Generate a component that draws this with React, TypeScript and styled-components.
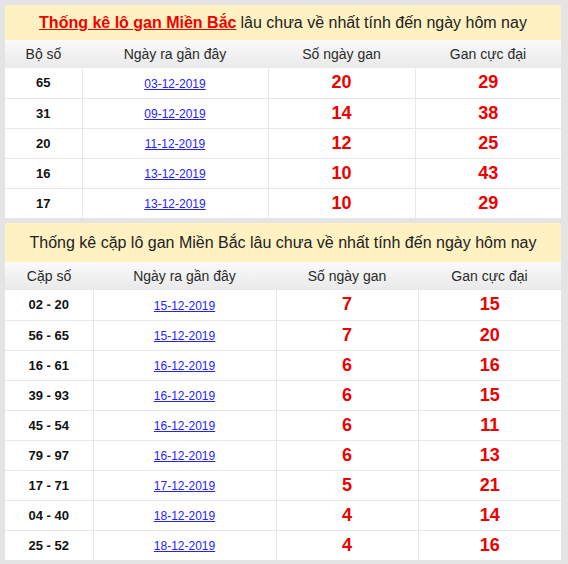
import React from "react";
import styled, { createGlobalStyle } from "styled-components";

const Global = createGlobalStyle`
  html, body { margin: 0; padding: 0; background: #e4e4e4; }
  body { font-family: "Liberation Sans", Arial, sans-serif; }
`;

const Page = styled.div`
  width: 556px;
  padding: 5px 7px 4px 5px;
  display: flex;
  flex-direction: column;
  gap: 5px;
`;

const Box = styled.section`
  background: #fff;
  border-radius: 4px 4px 0 0;
  overflow: hidden;
`;

const Title = styled.div<{ $h: number }>`
  height: ${(p) => p.$h}px;
  background: #fff1c2;
  display: flex;
  align-items: center;
  justify-content: center;
  font-size: 16px;
  color: #222;
  white-space: nowrap;
`;

const TitleStrong = styled.a`
  color: #f20000;
  font-weight: bold;
  text-decoration: underline;
  margin-right: 4px;
`;

const Table = styled.table`
  width: 100%;
  border-collapse: collapse;
  table-layout: fixed;
`;

const Head = styled.th`
  height: 28px;
  padding: 0;
  background: linear-gradient(#fafafa, #e9e9e9);
  font-size: 14px;
  font-weight: normal;
  color: #2a2a2a;
  text-align: center;
`;

const Row = styled.tr`
  height: 30px;
  & + & td { border-top: 1px solid #e8e8e8; }
`;

const Cell = styled.td`
  padding: 0;
  text-align: center;
  border-left: 1px solid #e8e8e8;
  &:first-child { border-left: none; }
`;

const Num = styled(Cell)`
  font-size: 13px;
  font-weight: bold;
  color: #111;
`;

const DateLink = styled.a`
  font-size: 12px;
  color: #2323ff;
  text-decoration: underline;
`;

const Big = styled(Cell)`
  font-size: 18px;
  font-weight: bold;
  color: #ee0000;
`;

type Item = [string, string, string, string];

const t1: Item[] = [
  ["65", "03-12-2019", "20", "29"],
  ["31", "09-12-2019", "14", "38"],
  ["20", "11-12-2019", "12", "25"],
  ["16", "13-12-2019", "10", "43"],
  ["17", "13-12-2019", "10", "29"],
];

const t2: Item[] = [
  ["02 - 20", "15-12-2019", "7", "15"],
  ["56 - 65", "15-12-2019", "7", "20"],
  ["16 - 61", "16-12-2019", "6", "16"],
  ["39 - 93", "16-12-2019", "6", "15"],
  ["45 - 54", "16-12-2019", "6", "11"],
  ["79 - 97", "16-12-2019", "6", "13"],
  ["17 - 71", "17-12-2019", "5", "21"],
  ["04 - 40", "18-12-2019", "4", "14"],
  ["25 - 52", "18-12-2019", "4", "16"],
];

function Stats({ first, cols, rows }: { first: string; cols: number[]; rows: Item[] }) {
  return (
    <Table>
      <colgroup>
        {cols.map((w, i) => (
          <col key={i} style={{ width: w }} />
        ))}
      </colgroup>
      <thead>
        <tr>
          <Head>{first}</Head>
          <Head>Ngày ra gần đây</Head>
          <Head>Số ngày gan</Head>
          <Head>Gan cực đại</Head>
        </tr>
      </thead>
      <tbody>
        {rows.map((r) => (
          <Row key={r[0]}>
            <Num>{r[0]}</Num>
            <Cell>
              <DateLink href="#">{r[1]}</DateLink>
            </Cell>
            <Big>{r[2]}</Big>
            <Big>{r[3]}</Big>
          </Row>
        ))}
      </tbody>
    </Table>
  );
}

export default function App() {
  return (
    <>
      <Global />
      <Page>
        <Box>
          <Title $h={35}>
            <TitleStrong href="#">Thống kê lô gan Miền Bắc</TitleStrong>
            lâu chưa về nhất tính đến ngày hôm nay
          </Title>
          <Stats first="Bộ số" cols={[77, 186, 147, 146]} rows={t1} />
        </Box>
        <Box>
          <Title $h={39}>
            Thống kê cặp lô gan Miền Bắc lâu chưa về nhất tính đến ngày hôm nay
          </Title>
          <Stats first="Cặp số" cols={[88, 183, 142, 143]} rows={t2} />
        </Box>
      </Page>
    </>
  );
}
